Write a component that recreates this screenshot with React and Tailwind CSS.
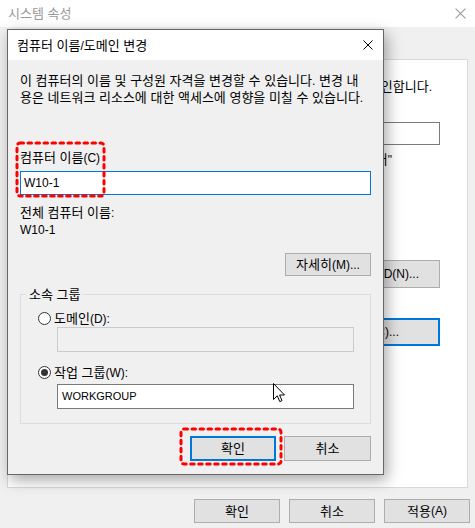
import React from 'react'

// latin runs are set a bit smaller than the hangul, like Malgun Gothic renders them
function L({ children, className = 'text-[12px]' }) {
  return <span className={`leading-none ${className}`}>{children}</span>
}

function Radio({ checked }) {
  return (
    <span className="w-[13px] h-[13px] rounded-full border border-[#333] bg-white flex items-center justify-center shrink-0">
      {checked && <span className="w-[7px] h-[7px] rounded-full bg-[#333]" />}
    </span>
  )
}

function CloseX({ color = '#000', size = 10 }) {
  return (
    <svg width={size} height={size} viewBox="0 0 10 10">
      <path d="M0.5 0.5 L9.5 9.5 M9.5 0.5 L0.5 9.5" stroke={color} strokeWidth="1" />
    </svg>
  )
}

function DashBox({ left, top, w, h }) {
  return (
    <svg className="absolute pointer-events-none" style={{ left, top }} width={w + 4} height={h + 4}>
      <rect x="2" y="2" width={w} height={h} rx="3" fill="none" stroke="#f00" strokeWidth="3" strokeDasharray="3.5 4.5" strokeLinecap="round" />
    </svg>
  )
}

export default function App() {
  return (
    <div className="relative w-[475px] h-[528px] overflow-hidden bg-[#f0f0f0] text-[13px] leading-[17px] text-black font-['Liberation_Sans','Noto_Sans_CJK_KR',sans-serif]">
      {/* background window: 시스템 속성 */}
      <div className="flex flex-col h-full">
        <div className="h-[27px] bg-white flex items-center justify-between pl-[8px] pr-[9px]">
          <span className="text-[#999] leading-[27px]">시스템 속성</span>
          <CloseX color="#999" size={11} />
        </div>
        <div className="h-[32px]" />
        <div className="mx-[7px] h-[429px] bg-white border border-[#d9d9d9] flex flex-col items-end pr-[27px] pt-[18px]">
          <div className="h-[17px] mr-[8px] whitespace-nowrap">확인합니다<L>.</L></div>
          <div className="mt-[27px] w-[280px] h-[23px] border border-[#7a7a7a] bg-white" />
          <div className="h-[17px] mt-[6px] mr-[48px] whitespace-nowrap">터<L>"</L></div>
          <div className="mt-[92px] w-[130px] h-[28px] border border-[#adadad] bg-[#e1e1e1] flex items-center justify-end pr-[20px] whitespace-nowrap"><L>ID(N)...</L></div>
          <div className="mt-[30px] w-[130px] h-[28px] border-2 border-[#0078d7] bg-[#e1e1e1] flex items-center justify-end pr-[39px] whitespace-nowrap"><L>(C)...</L></div>
        </div>
        <div className="flex justify-end gap-[9px] pr-[5px] mt-[11px]">
          <div className="w-[86px] h-[24px] border border-[#adadad] bg-[#e1e1e1] flex items-center justify-center">확인</div>
          <div className="w-[86px] h-[24px] border border-[#adadad] bg-[#e1e1e1] flex items-center justify-center">취소</div>
          <div className="w-[86px] h-[24px] border border-[#adadad] bg-[#e1e1e1] flex items-center justify-center">적용<L>(A)</L></div>
        </div>
      </div>

      {/* dialog: 컴퓨터 이름/도메인 변경 */}
      <div className="absolute left-[7px] top-[29px] w-[377px] h-[446px] border border-[#676767] bg-[#f0f0f0] flex flex-col shadow-[3px_5px_14px_rgba(0,0,0,0.35)]">
        <div className="h-[30px] bg-white flex items-center justify-between pl-[9px] pr-[10px] shrink-0">
          <span>컴퓨터 이름<L>/</L>도메인 변경</span>
          <CloseX />
        </div>
        <div className="flex flex-col px-[12px] pt-[12px]">
          <p className="h-[34px] whitespace-nowrap">
            이 컴퓨터의 이름 및 구성원 자격을 변경할 수 있습니다<L>.</L> 변경 내<br />
            용은 네트워크 리소스에 대한 액세스에 영향을 미칠 수 있습니다<L>.</L>
          </p>
          <div className="h-[17px] mt-[43px]">컴퓨터 이름<L>(C)</L></div>
          <div className="mt-[5px] h-[24px] border border-[#0078d7] bg-white flex items-center pl-[3px]"><L>W10-1</L></div>
          <div className="h-[17px] mt-[9px]">전체 컴퓨터 이름<L>:</L></div>
          <div className="h-[17px]"><L>W10-1</L></div>
          <div className="self-end mt-[15px] w-[86px] h-[23px] border border-[#adadad] bg-[#e1e1e1] flex items-center justify-center">자세히<L>(M)...</L></div>

          <fieldset className="mt-[10px] border border-[#dcdcdc] pb-[14px]">
            <legend className="h-[17px] ml-[5px] px-[3px]">소속 그룹</legend>
            <div className="h-[17px] flex items-center gap-[3px] pl-[17px] mt-[7px]">
              <Radio />
              <span>도메인<L>(D):</L></span>
            </div>
            <div className="ml-[36px] mr-[16px] h-[25px] border border-[#cccccc] bg-[#f0f0f0]" />
            <div className="h-[17px] flex items-center gap-[3px] pl-[17px] mt-[12px]">
              <Radio checked />
              <span>작업 그룹<L>(W):</L></span>
            </div>
            <div className="ml-[36px] mr-[16px] mt-[3px] h-[25px] border border-[#7a7a7a] bg-white flex items-center pl-[4px]"><L className="text-[11px]">WORKGROUP</L></div>
          </fieldset>

          <div className="flex justify-end gap-[8px] mt-[12px]">
            <div className="w-[86px] h-[25px] border-2 border-[#0078d7] bg-[#e1e1e1] flex items-center justify-center">확인</div>
            <div className="w-[87px] h-[25px] border border-[#adadad] bg-[#e1e1e1] flex items-center justify-center">취소</div>
          </div>
        </div>
      </div>

      {/* annotations */}
      <DashBox left={15} top={141} w={87} h={53} />
      <DashBox left={179} top={427} w={100} h={35} />

      {/* mouse cursor */}
      <svg className="absolute left-[273px] top-[383px]" width="13" height="20" viewBox="0 0 13 20">
        <path d="M0.5 0.5 L0.5 16.5 L4.3 12.8 L6.8 18.6 L9 17.6 L6.6 12 L11.5 12 Z" fill="#fff" stroke="#000" strokeWidth="1" strokeLinejoin="round" />
      </svg>
    </div>
  )
}
